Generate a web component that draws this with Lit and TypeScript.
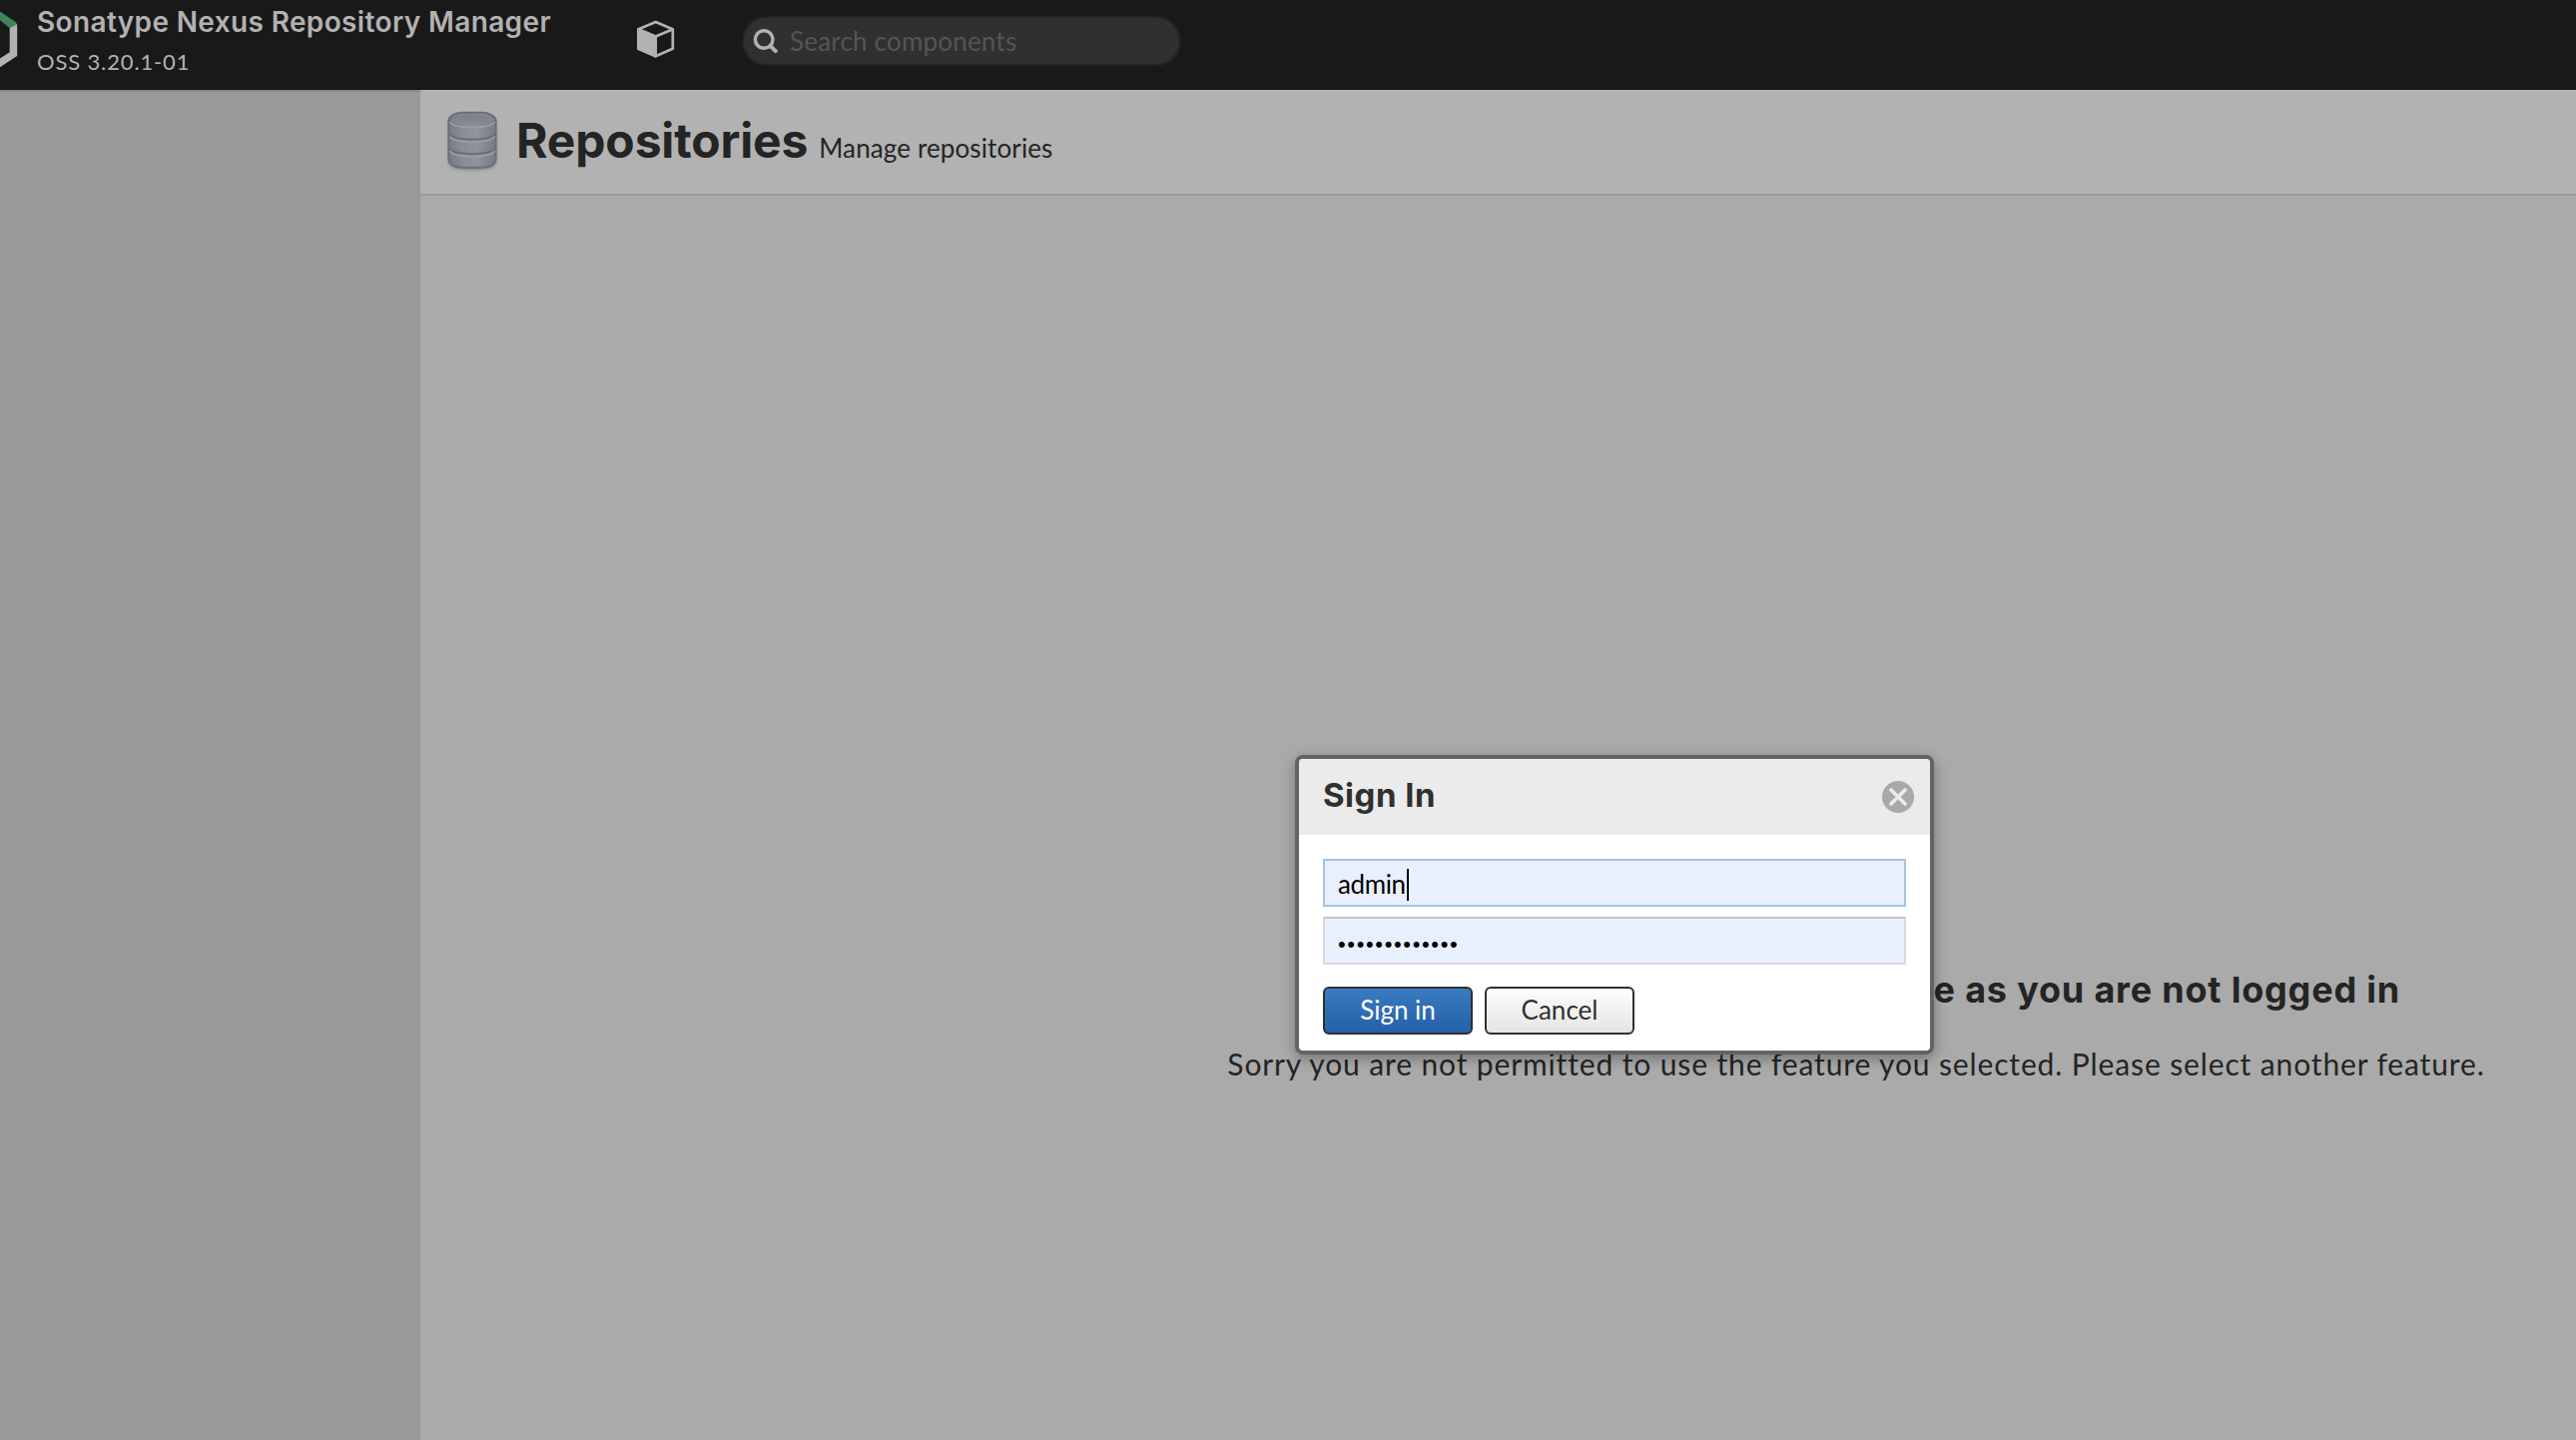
import { LitElement, html, css } from "lit";
import { customElement } from "lit/decorators.js";

@customElement("nx-header")
class NxHeader extends LitElement {
  static styles = css`
    :host { display: flex; flex: none; height: 90px; box-sizing: border-box; background: #191919; border-bottom: 1px solid #151315; color: #b2b2b2; }
    .logo { width: 20px; height: 76px; flex: none; }
    .brand { width: 600px; margin-left: 17px; padding-top: 2px; white-space: nowrap; }
    .name { font-family: Inter, sans-serif; font-size: 28px; font-weight: 600; line-height: 40px; letter-spacing: 0.36px; }
    .version { margin-top: 5px; font-size: 22px; line-height: 30px; letter-spacing: 0.85px; }
    .cube { width: 40px; height: 40px; margin: 19px 66px 0 0; flex: none; }
    .search { display: flex; width: 440px; height: 50px; box-sizing: border-box; margin-top: 16px; border: 2px solid #232323; border-radius: 25px; background: #303030; }
    .glass { width: 26px; height: 26px; margin: 10px 11px 0 9px; flex: none; }
    .hint { font-size: 26px; line-height: 46px; letter-spacing: 0.2px; color: #555; }
  `;
  render() {
    return html`
      <svg class="logo" viewBox="0 0 20 76">
        <path d="M9.7 27 L17.2 24 V56 L0 67.2 V58.6 L9.7 52.2Z" fill="#b2b2b2" />
        <path d="M0 11.5 L16.4 22.4 L16.6 24.2 L9.8 28.2 L0 20.2Z" fill="#3f8458" />
      </svg>
      <div class="brand">
        <div class="name">Sonatype Nexus Repository Manager</div>
        <div class="version">OSS 3.20.1-01</div>
      </div>
      <svg class="cube" viewBox="0 0 40 40" stroke="#b2b2b2" stroke-width="2.7" stroke-linejoin="round">
        <path d="M2.4 10.3 L19.7 3 L36.8 10.3 V29.7 L19.7 37.3 L2.4 29.7Z" fill="none" />
        <path d="M2.4 10.3 L19.7 17.6 V37.3 L2.4 29.7Z" fill="#b2b2b2" />
        <path d="M19.7 17.6 L36.8 10.3" />
      </svg>
      <div class="search">
        <svg class="glass" viewBox="0 0 26 26" fill="none" stroke="#b2b2b2" stroke-linecap="round">
          <circle cx="11.2" cy="11.5" r="8.8" stroke-width="3.4" />
          <path d="M17.6 18 L22.8 23.2" stroke-width="4" />
        </svg>
        <span class="hint">Search components</span>
      </div>
    `;
  }
}

@customElement("nx-feature")
class NxFeature extends LitElement {
  static styles = css`
    :host { display: flex; flex-direction: column; width: 2876px; flex: none; background: #aaa; color: #242424; }
    .bar { display: flex; height: 106px; box-sizing: border-box; flex: none; background: #b2b2b2; border-bottom: 2px solid #999; padding: 19px 0 0 25px; }
    .db { width: 54px; height: 64px; margin-right: 17px; flex: none; }
    .titles { display: flex; align-items: baseline; gap: 11px; height: 60px; padding-top: 2px; }
    h1 { margin: 0; font-family: Inter, sans-serif; font-size: 48px; line-height: 60px; letter-spacing: -0.15px; }
    .sub { font-size: 26px; letter-spacing: 0.12px; }
    .body { display: flex; flex-direction: column; align-items: center; padding-top: 773px; }
    h2 { margin: 0 0 33px; width: 1090px; text-align: right; font-family: Inter, sans-serif; font-size: 36px; line-height: 44px; letter-spacing: 0.8px; }
    p { margin: 0; font-size: 30px; line-height: 38px; letter-spacing: 0.87px; white-space: nowrap; }
  `;
  render() {
    return html`
      <div class="bar">
        <svg class="db" viewBox="0 0 54 64">
          <defs>
            <linearGradient id="side">
              <stop offset="0" stop-color="#767b82" />
              <stop offset="0.3" stop-color="#898e96" />
              <stop offset="0.6" stop-color="#8f949c" />
              <stop offset="1" stop-color="#777c83" />
            </linearGradient>
            <linearGradient id="lid" x2="0" y2="1">
              <stop offset="0" stop-color="#7a7f87" />
              <stop offset="1" stop-color="#888d95" />
            </linearGradient>
            <filter id="soft" x="-20%" y="-20%" width="140%" height="140%"><feGaussianBlur stdDeviation="1.5" /></filter>
          </defs>
          <path d="M3 12 V54 Q4 61.5 27 61.5 Q50 61.5 51 54 V12Z" fill="#6f7378" opacity="0.7" filter="url(#soft)" />
          <path d="M3.4 12 C3.4 7 10 3.8 18 3.8 H36 C44 3.8 50.6 7 50.6 12 V50 C50.6 56 44 58.8 36 58.8 H18 C10 58.8 3.4 56 3.4 50Z" fill="url(#side)" stroke="#6a7076" stroke-width="2" />
          <g fill="none">
            <path d="M4 25 C8 32.5 46 32.5 50 25 M4 39.5 C8 47 46 47 50 39.5" stroke="#6a7076" stroke-width="2" />
            <path d="M4.5 27.5 C8 35 46 35 49.5 27.5 M4.5 42 C8 49.5 46 49.5 49.5 42 M4.5 13 C8 20.5 46 20.5 49.5 13" stroke="#9a9fa5" stroke-width="1.6" />
          </g>
          <ellipse cx="27" cy="11" rx="21" ry="5.8" fill="url(#lid)" />
        </svg>
        <div class="titles">
          <h1>Repositories</h1>
          <span class="sub">Manage repositories</span>
        </div>
      </div>
      <div class="body">
        <h2>e as you are not logged in</h2>
        <p>Sorry you are not permitted to use the feature you selected. Please select another feature.</p>
      </div>
    `;
  }
}

@customElement("nx-sign-in")
class NxSignIn extends LitElement {
  static styles = css`
    :host { display: block; box-sizing: border-box; width: 640px; height: 300px; border: 4px solid #636363; border-radius: 8px; background: #fff; overflow: hidden; box-shadow: 0 4px 14px rgba(0, 0, 0, 0.32); }
    .head { display: flex; justify-content: space-between; height: 76px; background: #ebebeb; padding: 0 16px 0 24px; }
    .title { font-family: Inter, sans-serif; font-size: 33px; font-weight: 700; line-height: 72px; letter-spacing: 0.5px; color: #303030; }
    .close { width: 32px; height: 32px; margin-top: 22px; }
    .form { display: flex; flex-direction: column; gap: 10px; padding: 24px 24px 0; }
    .field { display: flex; height: 48px; box-sizing: border-box; border: 2px solid #d8d9dc; border-top-color: #c1c3c6; background: #e8f0fe; padding-left: 13px; color: #000; font-size: 26px; line-height: 46px; }
    .field.focused { border-color: #a1c6e0; }
    .user { letter-spacing: -0.4px; }
    .caret { width: 2px; height: 32px; margin: 8px 0 0 1px; background: #000; }
    .secret { font-family: "Liberation Sans", sans-serif; font-size: 22px; line-height: 51px; letter-spacing: 1.63px; }
    .actions { display: flex; gap: 12px; margin-top: 12px; }
    .button { width: 150px; height: 48px; box-sizing: border-box; border: 2px solid #303030; border-radius: 6px; text-align: center; font-size: 26px; line-height: 42px; background: linear-gradient(#fefefe, #e4e4e4); color: #303030; }
    .primary { background: linear-gradient(#387bc0, #2560a7); color: #fff; }
  `;
  render() {
    return html`
      <div class="head">
        <span class="title">Sign In</span>
        <svg class="close" viewBox="0 0 32 32">
          <circle cx="16" cy="16" r="16" fill="#a9a9a9" />
          <path d="M9 9 L23 23 M23 9 L9 23" stroke="#ebebeb" stroke-width="3.8" stroke-linecap="round" />
        </svg>
      </div>
      <div class="form">
        <div class="field focused"><span class="user">admin</span><span class="caret"></span></div>
        <div class="field"><span class="secret">${"•".repeat(13)}</span></div>
        <div class="actions">
          <div class="button primary">Sign in</div>
          <div class="button">Cancel</div>
        </div>
      </div>
    `;
  }
}

@customElement("app-root")
class AppRoot extends LitElement {
  static styles = css`
    :host { display: flex; flex-direction: column; position: relative; width: 2580px; height: 1442px; overflow: hidden; font-family: Lato, "Open Sans", sans-serif; background: #aaa; }
    .main { display: flex; flex: 1; min-height: 0; overflow: hidden; }
    .side { width: 421px; flex: none; box-sizing: border-box; background: #999; border-top: 2px solid #888; }
    .dialog { position: absolute; left: 1297px; top: 756px; }
  `;
  render() {
    return html`
      <nx-header></nx-header>
      <div class="main">
        <div class="side"></div>
        <nx-feature></nx-feature>
      </div>
      <nx-sign-in class="dialog"></nx-sign-in>
    `;
  }
}
